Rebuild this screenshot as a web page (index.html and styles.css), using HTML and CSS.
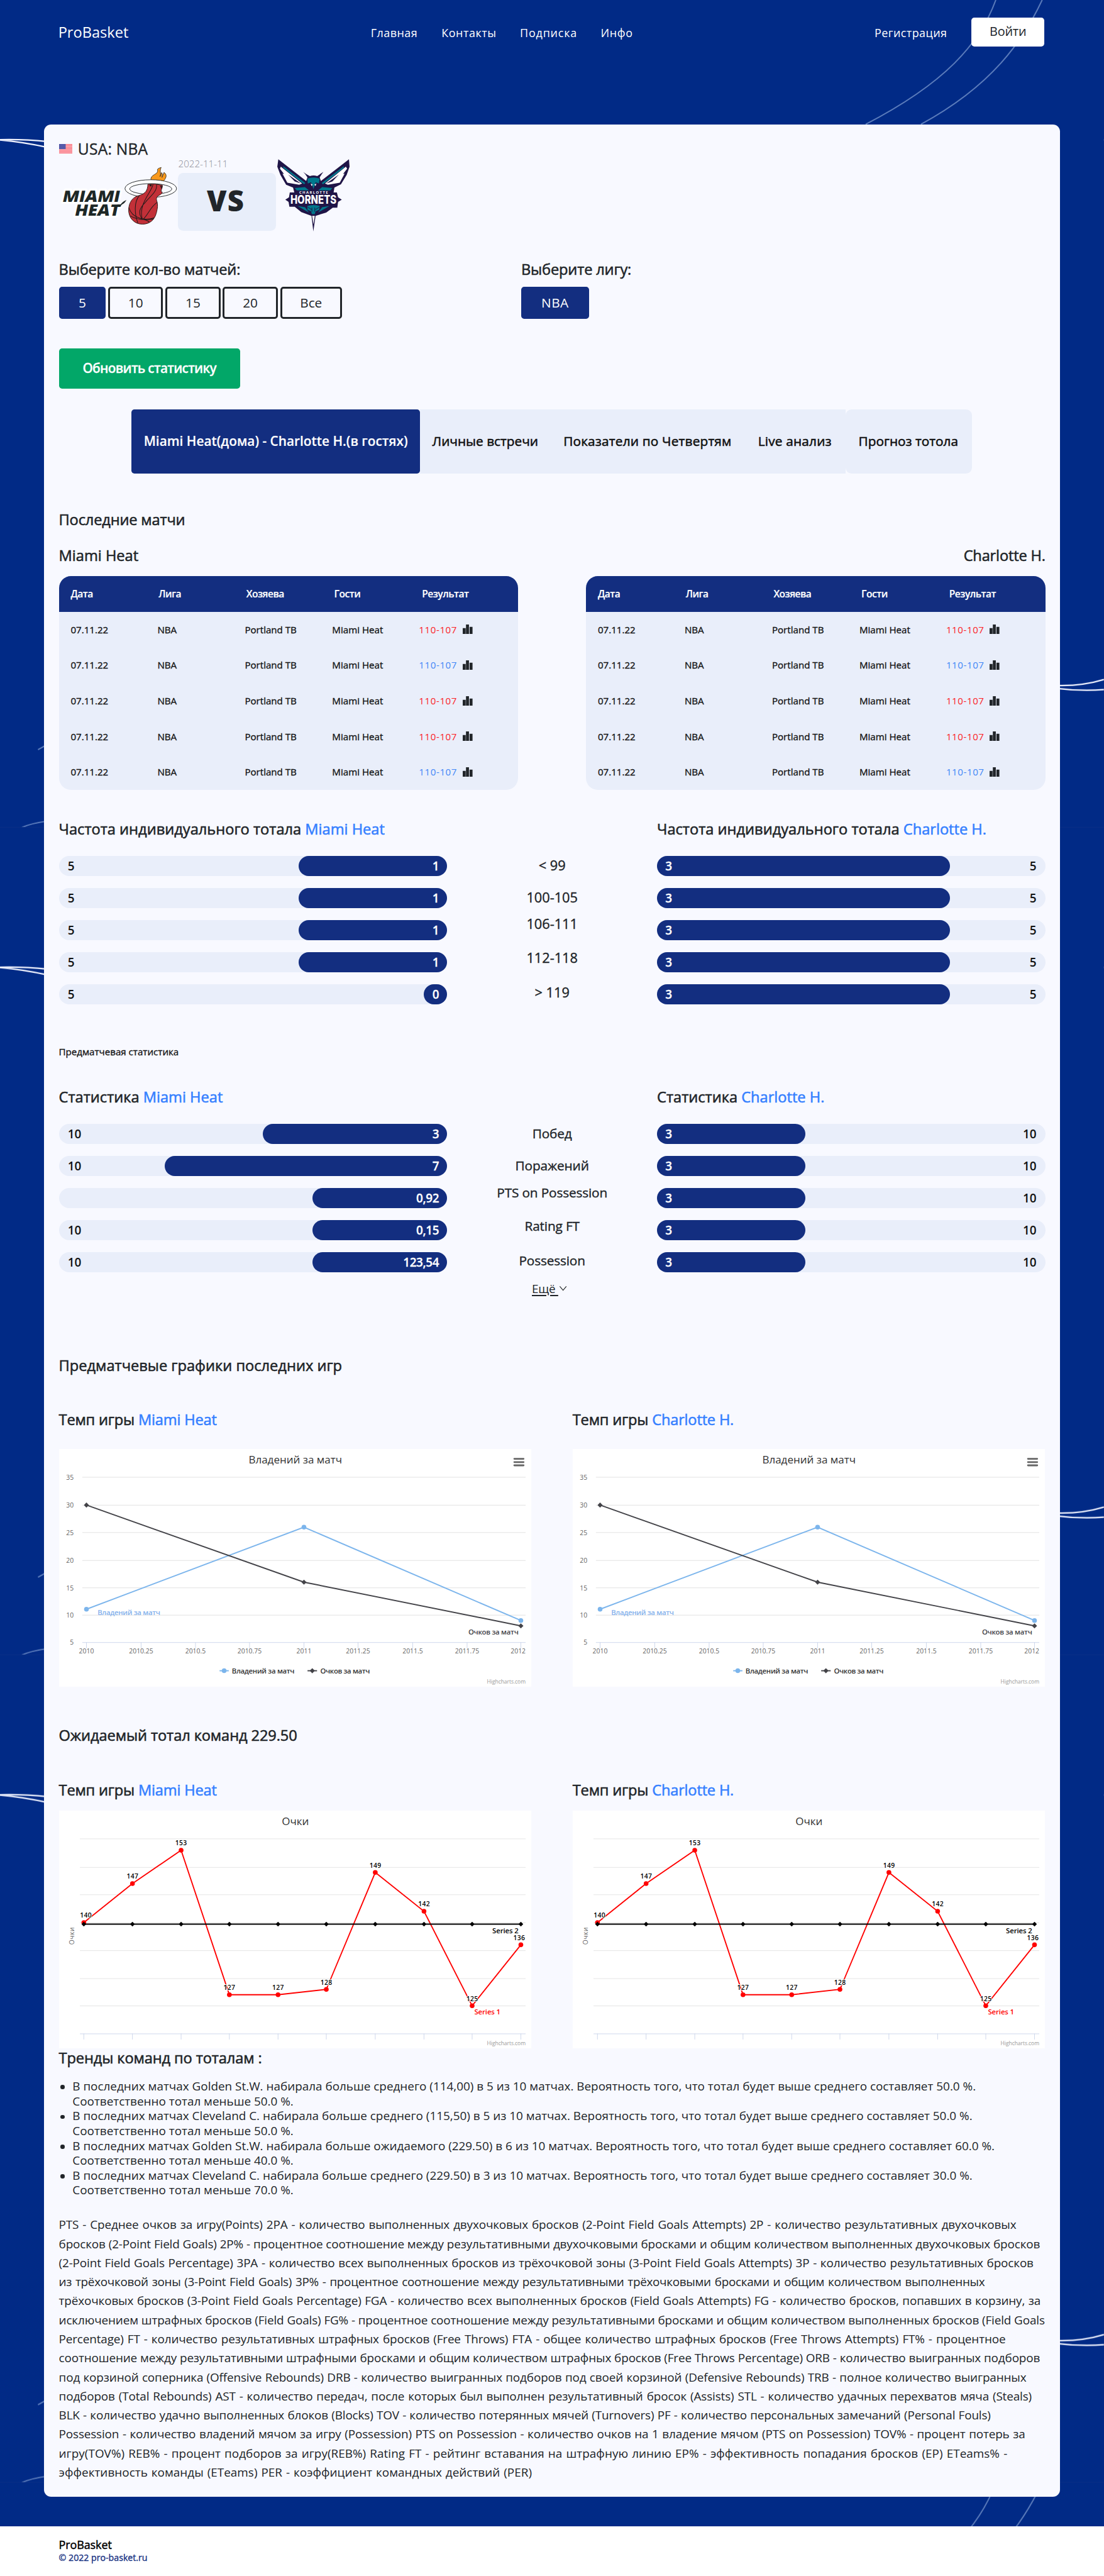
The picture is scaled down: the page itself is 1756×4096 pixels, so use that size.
FILE: index.html
```html
<!DOCTYPE html>
<html lang="ru">
<head>
<meta charset="utf-8">
<title>ProBasket</title>
<link rel="stylesheet" href="styles.css">
</head>
<body>
<div class="page">
<svg class="backdrop" viewBox="0 0 1858 4250" preserveAspectRatio="none" aria-hidden="true">
  <defs>
    <pattern id="court" width="1858" height="1392" patternUnits="userSpaceOnUse">
      <g fill="none" stroke="#5f7fbd" stroke-width="2">
        <path d="M1676 0C1649 74 1590 140 1457 209"/>
        <path d="M1754 0C1722 68 1670 144 1550 209"/>
        <path d="M64 1261L80 1252M36 1392Q52 1385 80 1381"/>
      </g>
      <g fill="none" stroke="#f2f4ff" stroke-width="2.4">
        <path d="M0 235Q38 234 80 238M0 235.500Q40 239 80 248"/>
        <path d="M1780 1153Q1822 1154 1858 1143M1780 1158Q1820 1163 1858 1160"/>
      </g>
      <path d="M0 1391.500H1858" stroke="#0b2f86" stroke-width="1"/>
    </pattern>
  </defs>
  <rect width="1858" height="4250" fill="url(#court)"/>
</svg>

<header class="top">
  <a class="brand">ProBasket</a>
  <nav class="menu"><a class="m1">Главная</a><a class="m2">Контакты</a><a class="m3">Подписка</a><a class="m4">Инфо</a></nav>
  <div class="auth"><a class="reg">Регистрация</a><a class="login">Войти</a></div>
</header>

<main class="card">
  <div class="league">
    <svg width="23" height="16" viewBox="0 0 23 16"><rect width="23" height="16" fill="#fbb6bd"/><path d="M0 .6H23M0 3H23M0 5.500H23M0 8H23M0 10.400H23M0 12.900H23M0 15.400H23" stroke="#fb6a76" stroke-width="1.100"/><rect width="11" height="8.500" fill="#4a4fa3"/><path d="M1 2H10.500M1 4.300H10.500M1 6.600H10.500" stroke="#8d91c8" stroke-width=".8" stroke-dasharray="1 1"/></svg>
    <span>USA: NBA</span>
  </div>
  <div class="match">
    <svg class="logo-heat" width="200" height="124" viewBox="55 131 581 360">
      <g class="heat-word" fill="#1d2726" stroke="#fff" stroke-width="20" stroke-linejoin="round" paint-order="stroke">
        <text transform="translate(68 348) skewX(-12)" textLength="280" lengthAdjust="spacingAndGlyphs">MIAMI</text>
        <text transform="translate(128 417) skewX(-12)" textLength="220" lengthAdjust="spacingAndGlyphs">HEAT</text>
      </g>
      <path d="M340 362H355Q368 346 384 340Q376 356 362 362L352 374H338Z" fill="#1d2726"/>
      <path d="M504 244C498 212 545 218 536 190C540 184 548 183 554 181C544 200 556 212 548 226L556 206C564 215 556 224 558 230L568 205C588 220 574 236 566 247Z" fill="#f8991d" stroke="#26211c" stroke-width="2.500"/>
      <path fill-rule="evenodd" d="M377 284A126 43 0 1 0 629 284A126 43 0 1 0 377 284ZM400 286A103 26 0 1 0 606 286A103 26 0 1 0 400 286Z" fill="#fff" stroke="#26292a" stroke-width="3"/>
      <path d="M489 263Q525 258 560 268C562 285 545 298 560 302C550 322 529 314 531 340C540 362 536 382 530 405C520 440 496 458 462 458C420 458 393 425 395 385C397 350 415 325 445 318C478 310 488 292 489 263Z" fill="#c23038" stroke="#2c1a1a" stroke-width="3"/>
      <path d="M396 378C412 428 470 444 520 427M404 418C440 440 480 436 517 433M447 319C420 350 424 410 440 452M514 264C508 300 440 360 462 434M531 264C538 300 490 330 478 350C446 380 440 405 462 434M534 352C500 375 492 410 466 434M465 434Q490 440 496 448" fill="none" stroke="#221a1a" stroke-width="3.200"/>
      <path d="M497 264h10v9h-8zM548 270l12 2-4 14z" fill="#221a1a"/>
    </svg>
    <div class="versus"><span class="date">2022-11-11</span><strong>VS</strong></div>
    <svg class="logo-hornets" width="126" height="124" viewBox="1115 140 365 360">
      <path d="M1126 144L1262 250L1268 232Q1258 215 1248 206Q1270 222 1280 226Q1298 220 1316 226Q1330 216 1346 205Q1338 216 1328 232L1334 250L1471 144L1474 180L1460 220L1432 266L1400 282L1396 306H1412L1418 330L1436 341L1418 352L1414 380H1392L1360 404L1308 420L1297 496L1288 420L1238 402L1206 376H1180L1176 352L1160 341L1178 330L1182 306H1204L1198 282L1164 268L1136 220L1121 180Z" fill="#201547"/>
      <path d="M1138 180L1242 262L1228 268L1170 258L1146 214L1154 216L1134 190ZM1456 180L1354 262L1368 268L1426 258L1450 214L1442 216L1462 190Z" fill="#fff"/>
      <path d="M1150 178L1258 260L1252 266L1150 186ZM1446 178L1338 260L1344 266L1446 186Z" fill="#00788c"/>
      <path d="M1174 218L1236 262L1206 252ZM1422 218L1360 262L1390 252Z" fill="#201547"/>
      <path d="M1268 238Q1298 228 1328 238L1324 262L1308 256L1298 290L1286 256L1270 262ZM1206 284L1256 280L1276 296H1216ZM1390 284L1340 280L1320 296H1380Z" fill="#00788c"/>
      <path d="M1284 262l10 6-6 6zM1312 262l-10 6 6 6z" fill="#fff"/>
      <text class="charlotte" x="1228" y="312" textLength="140" fill="#fff">CHARLOTTE</text>
      <path d="M1186 312L1206 328V320H1384L1410 310L1408 362L1384 356H1222L1190 362Z" fill="#201547"/>
      <text class="hornets" x="1185" y="361" textLength="225" lengthAdjust="spacingAndGlyphs" fill="#fff">HORNETS</text>
      <path d="M1268 372Q1298 362 1328 372L1326 390L1308 398L1304 412H1290L1286 398L1268 390ZM1220 372L1256 378L1276 404ZM1376 372L1340 378L1320 404Z" fill="#00788c"/>
      <path d="M1270 378l20 12M1326 378l-20 12M1290 400V380M1304 400V380" stroke="#201547" stroke-width="3"/>
      <path d="M1291 420H1304L1298 462Z" fill="#fff"/>
    </svg>
  </div>

  <div class="filters">
    <section>
      <h2 class="h tight">Выберите кол-во матчей:</h2>
      <div class="chips"><a class="chip on c5">5</a><a class="chip c10">10</a><a class="chip c10">15</a><a class="chip c10">20</a><a class="chip call">Все</a></div>
    </section>
    <section>
      <h2 class="h tight">Выберите лигу:</h2>
      <div class="chips"><a class="chip on cnba">NBA</a></div>
    </section>
  </div>
  <a class="refresh">Обновить статистику</a>

  <nav class="tabs"><a class="tab active">Miami Heat(дома) - Charlotte H.(в гостях)</a><a class="tab t2">Личные встречи</a><a class="tab t3">Показатели по Четвертям</a><a class="tab t4">Live анализ</a><a class="tab t5">Прогноз тотола</a></nav>

  <h2 class="h tight recent">Последние матчи</h2>
  <div class="names h"><span>Miami Heat</span><span class="tight">Charlotte H.</span></div>
  <div class="tables"><div class="games"></div><div class="games"></div></div>

  <div class="pair freq-head"><h2 class="h">Частота индивидуального тотала <b>Miami Heat</b></h2><h2 class="h">Частота индивидуального тотала <b>Charlotte H.</b></h2></div>
  <div class="pair" id="freq"></div>

  <p class="pre">Предматчевая статистика</p>
  <div class="pair stat-head"><h2 class="h">Статистика <b>Miami Heat</b></h2><h2 class="h">Статистика <b>Charlotte H.</b></h2></div>
  <div class="pair" id="stat"></div>
  <div class="more"><u>Ещё </u><svg width="14" height="10" viewBox="0 0 14 10"><path d="M1.500 1.500L7 8L12.500 1.500" fill="none" stroke="#212529" stroke-width="1.200"/></svg></div>

  <h2 class="h graphs">Предматчевые графики последних игр</h2>
  <div class="duo tempo1"><h2 class="h">Темп игры <b>Miami Heat</b></h2><h2 class="h">Темп игры <b>Charlotte H.</b></h2></div>
  <div class="duo charts1"><svg class="chart pace" viewBox="0 0 795 400"></svg><svg class="chart pace" viewBox="0 0 795 400"></svg></div>

  <h2 class="h expected">Ожидаемый тотал команд 229.50</h2>
  <div class="duo tempo2"><h2 class="h">Темп игры <b>Miami Heat</b></h2><h2 class="h">Темп игры <b>Charlotte H.</b></h2></div>
  <div class="duo charts2"><svg class="chart points" viewBox="0 0 795 400"></svg><svg class="chart points" viewBox="0 0 795 400"></svg></div>

  <h2 class="h trends-head">Тренды команд по тоталам :</h2>
  <ul class="trends">
    <li>В последних матчах Golden St.W. набирала больше среднего (114,00) в 5 из 10 матчах. Вероятность того, что тотал будет выше среднего составляет 50.0 %.<br>Соответственно тотал меньше 50.0 %.</li>
    <li>В последних матчах Cleveland C. набирала больше среднего (115,50) в 5 из 10 матчах. Вероятность того, что тотал будет выше среднего составляет 50.0 %.<br>Соответственно тотал меньше 50.0 %.</li>
    <li>В последних матчах Golden St.W. набирала больше ожидаемого (229.50) в 6 из 10 матчах. Вероятность того, что тотал будет выше среднего составляет 60.0 %.<br>Соответственно тотал меньше 40.0 %.</li>
    <li>В последних матчах Cleveland C. набирала больше среднего (229.50) в 3 из 10 матчах. Вероятность того, что тотал будет выше среднего составляет 30.0 %.<br>Соответственно тотал меньше 70.0 %.</li>
  </ul>
  <p class="glossary">
    <span style="width:1611px">PTS - Среднее очков за игру(Points) 2PA - количество выполненных двухочковых бросков (2-Point Field Goals Attempts) 2P - количество результативных двухочковых</span>
    <span style="width:1651px">бросков (2-Point Field Goals) 2P% - процентное соотношение между результативными двухочковыми бросками и общим количеством выполненных двухочковых бросков</span>
    <span style="width:1640px">(2-Point Field Goals Percentage) 3PA - количество всех выполненных бросков из трёхочковой зоны (3-Point Field Goals Attempts) 3P - количество результативных бросков</span>
    <span class="dense" style="width:1558px">из трёхочковой зоны (3-Point Field Goals) 3P% - процентное соотношение между результативными трёхочковыми бросками и общим количеством выполненных</span>
    <span style="width:1652px">трёхочковых бросков (3-Point Field Goals Percentage) FGA - количество всех выполненных бросков (Field Goals Attempts) FG - количество бросков, попавших в корзину, за</span>
    <span style="width:1659px">исключением штрафных бросков (Field Goals) FG% - процентное соотношение между результативными бросками и общим количеством выполненных бросков (Field Goals</span>
    <span style="width:1593px">Percentage) FT - количество результативных штрафных бросков (Free Throws) FTA - общее количество штрафных бросков (Free Throws Attempts) FT% - процентное</span>
    <span style="width:1651px">соотношение между результативными штрафными бросками и общим количеством штрафных бросков (Free Throws Percentage) ORB - количество выигранных подборов</span>
    <span style="width:1628px">под корзиной соперника (Offensive Rebounds) DRB - количество выигранных подборов под своей корзиной (Defensive Rebounds) TRB - полное количество выигранных</span>
    <span style="width:1637px">подборов (Total Rebounds) AST - количество передач, после которых был выполнен результативный бросок (Assists) STL - количество удачных перехватов мяча (Steals)</span>
    <span style="width:1568px">BLK - количество удачно выполненных блоков (Blocks) TOV - количество потерянных мячей (Turnovers) PF - количество персональных замечаний (Personal Fouls)</span>
    <span style="width:1626px">Possession - количество владений мячом за игру (Possession) PTS on Possession - количество очков на 1 владение мячом (PTS on Possession) TOV% - процент потерь за</span>
    <span class="loose" style="width:1596px">игру(TOV%) REB% - процент подборов за игру(REB%) Rating FT - рейтинг вставания на штрафную линию EP% - эффективность попадания бросков (EP) ETeams% -</span>
    <span class="loose" style="width:796px">эффективность команды (ETeams) PER - коэффициент командных действий (PER)</span>
  </p>
</main>

<footer class="foot"><strong>ProBasket</strong><span>© 2022 pro-basket.ru</span></footer>
</div>
<script src="app.js"></script>
</body>
</html>
```
FILE: styles.css
```css
* { box-sizing: border-box; }
html { background: #fff; }
body { margin: 0; width: 1756px; height: 4096px; overflow: hidden; }
.page {
  width: 1857.500px;
  height: 4333px;
  zoom: 0.9453;
  position: relative;
  overflow: hidden;
  background: linear-gradient(#012a86 4250px, #fff 4250px);
  font-family: "Open Sans", "Noto Sans", sans-serif;
  font-size: 20px;
  color: #212529;
  white-space: nowrap;
}
h2, p, ul { margin: 0; }
.backdrop { position: absolute; left: 0; top: 0; width: 100%; height: 4250px; }

.top { position: relative; height: 108px; padding: 0 100px 0 99px; display: grid; grid-template-columns: 525px 1fr auto; align-items: center; color: #fff; }
.brand { font-size: 25px; line-height: 30px; margin-left: -1px; }
.menu { display: flex; gap: 40px; font-size: 19px; padding-top: 3px; }
.m1 { width: 79px; letter-spacing: .45px; }
.m2 { width: 92px; letter-spacing: .55px; }
.m3 { width: 96px; letter-spacing: .85px; }
.m4 { letter-spacing: .6px; }
.auth { display: flex; align-items: center; gap: 41px; font-size: 19px; }
.reg { letter-spacing: .45px; padding-top: 3px; }
.login { width: 123px; height: 48px; line-height: 46px; border-radius: 5px; background: #fff; color: #212529; font-size: 21px; letter-spacing: -.2px; text-align: center; }

.card { position: relative; margin: 101px 73.500px 0 74px; height: 3991px; padding: 28px 25px 0; border-radius: 12px; background: #f8f9ff; }
.h { font-size: 25px; line-height: 30px; font-weight: 400; -webkit-text-stroke: .6px currentColor; }
.h b { font-weight: 400; color: #3580ff; }
.tight { letter-spacing: -.18px; }

.league { display: flex; align-items: center; gap: 9px; height: 27px; font-size: 26px; letter-spacing: .25px; -webkit-text-stroke: .4px currentColor; }
.match { display: flex; height: 128px; padding-top: 1px; }
.logo-hornets { margin-top: 2px; }
.heat-word { font: 800 77px "Open Sans", sans-serif; }
.charlotte { font: 700 18px "Open Sans", sans-serif; }
.hornets { font: 800 56px "Inter", sans-serif; }
.versus { width: 165px; }
.date { display: block; height: 26px; line-height: 22px; padding-left: 1px; font-size: 16px; font-weight: 300; color: #8b8d96; }
.versus strong { display: block; height: 97px; line-height: 94px; border-radius: 9px; background: #e8eefa; text-align: center; padding-right: 3px; font-size: 48px; font-weight: 800; letter-spacing: 1.500px; }

.filters { margin-top: 46px; display: grid; grid-template-columns: 778px 1fr; }
.chips { display: flex; gap: 4px; margin-top: 14px; }
.chip { height: 54px; line-height: 47px; border: 3.200px solid #212529; border-radius: 5px; text-align: center; font-size: 22px; }
.chip.on { background: #132e80; border-color: #132e80; color: #fff; }
.c5 { width: 79px; }
.c10 { width: 92.500px; }
.call { width: 104px; }
.cnba { width: 114px; letter-spacing: .5px; }
.refresh { display: block; margin-top: 50px; width: 305px; height: 68px; line-height: 67px; border-radius: 5px; background: #02a768; color: #fff; text-align: center; font-size: 22px; font-weight: 600; letter-spacing: -.75px; -webkit-text-stroke: .3px #fff; }

.tabs { display: flex; margin: 35px 0 0 122px; height: 108px; line-height: 107px; font-size: 22px; text-align: center; color: #111; }
.tab { background: #e9eefa; -webkit-text-stroke: .6px currentColor; }
.tab.active { width: 486px; background: #132e80; color: #fff; border-radius: 5px; font-weight: 600; letter-spacing: .02px; -webkit-text-stroke: .2px #fff; }
.t2 { width: 220px; padding-right: 1px; }
.t3 { width: 328px; padding-right: 3px; letter-spacing: .2px; }
.t4 { width: 168px; padding-right: 3px; letter-spacing: .2px; }
.t5 { width: 213px; padding-right: 2px; border-radius: 10px; }

.recent { margin-top: 62px; }
.names { margin-top: 30px; display: flex; justify-content: space-between; }
.tables { margin-top: 20px; display: flex; justify-content: space-between; }
.games { width: 773px; height: 360px; border-radius: 20px; overflow: hidden; background: #e9eefa; }
.row { display: grid; grid-template-columns: 146px 147px 147px 146px auto; height: 60px; line-height: 60px; padding-left: 20px; font-size: 16px; color: #111; -webkit-text-stroke: .35px currentColor; }
.row.head { grid-template-columns: repeat(4, 147.800px) auto; background: #132e80; color: #fff; font-size: 16.500px; font-weight: 600; letter-spacing: -.55px; -webkit-text-stroke: .2px #fff; }
.score { display: flex; align-items: center; gap: 9px; -webkit-text-stroke: 0; letter-spacing: .6px; }
.lost { color: #fb2226; }
.won { color: #4286f7; }

.pair { display: grid; grid-template-columns: 653.500px 353px 653.500px; }
.pair .h:last-child { grid-column: 3; }
.freq-head { margin-top: 51px; margin-bottom: 30px; }
.stat-head { margin-top: 51px; margin-bottom: 30px; }
.bars { display: grid; gap: 20px; }
.bar { display: flex; justify-content: space-between; height: 34px; line-height: 34px; border-radius: 17px; background: #e9eefa; font-size: 20px; font-weight: 600; color: #111; }
.bar .total { padding: 0 15px; }
.bar .fill { border-radius: 17px; background: #132e80; color: #fff; padding: 0 14px; text-align: right; letter-spacing: -.4px; -webkit-text-stroke: .3px #fff; }
.bar.right .fill { text-align: left; }
.labels { text-align: center; font-size: 23px; line-height: 30px; }
.labels div { height: 30px; -webkit-text-stroke: .4px currentColor; }
.labels div:nth-child(1) { margin-top: 1px; }
.labels div:nth-child(2) { margin-top: 24px; }
.labels div:nth-child(3) { margin-top: 15px; }
.labels div:nth-child(4) { margin-top: 27px; }
.labels div:nth-child(5) { margin-top: 28px; }
#stat .labels { font-size: 22px; letter-spacing: -.15px; }
.pre { margin-top: 70px; font-size: 16px; line-height: 20px; color: #111; -webkit-text-stroke: .35px currentColor; }
.more { margin: 15px 0 0 796px; display: flex; align-items: center; gap: 6px; height: 24px; line-height: 24px; font-size: 20px; letter-spacing: -.3px; }
.more u { text-decoration-thickness: 2px; text-underline-offset: 3px; white-space: pre; width: 39px; }

.graphs { margin-top: 102px; }
.duo { display: grid; grid-template-columns: 795px 795px; column-gap: 69.500px; }
.duo .h { letter-spacing: -.2px; }
.tempo1 { margin-top: 61px; }
.charts1 { margin-top: 35px; }
.expected { margin-top: 67px; letter-spacing: -.1px; }
.tempo2 { margin-top: 61px; }
.charts2 { margin-top: 20px; }
.chart { width: 795px; height: 400px; background: #fff; display: block; }
.chart text { font-family: "Open Sans", sans-serif; }
.title { font-size: 18px; fill: #333; }
.axis { font-size: 11px; fill: #666; }
.series { font-size: 12px; font-weight: 600; }
.value { font-size: 11px; font-weight: 600; fill: #000; stroke: #fff; stroke-width: 2px; paint-order: stroke; }
.credit { font-size: 9px; fill: #999; }

.trends-head { margin-top: 1px; letter-spacing: -.12px; }
.trends { margin-top: 21px; padding-left: 23px; list-style: none; line-height: 25px; }
.trends li { position: relative; }
.trends li::before { content: ""; position: absolute; left: -20px; top: 10px; width: 7px; height: 7px; border-radius: 50%; background: #212529; }
.glossary { margin-top: 29px; line-height: 32.030px; letter-spacing: -.14px; }
.glossary span { display: block; height: 32.030px; text-align-last: justify; }
.glossary .dense { letter-spacing: -.32px; }
.glossary .loose { letter-spacing: .03px; }

.foot { position: relative; margin-top: 50px; height: 83px; padding: 21px 99px 0; background: #fff; display: flex; flex-direction: column; }
.foot strong { font-size: 19px; line-height: 21px; font-weight: 400; color: #000; letter-spacing: -.1px; -webkit-text-stroke: .5px #000; }
.foot span { margin-top: 1px; font-size: 15px; line-height: 20px; color: #132e80; -webkit-text-stroke: .35px #132e80; }
```
FILE: app.js
```js
// Recent games
const results = ['lost', 'won', 'lost', 'lost', 'won'];
const barIcon = '<svg width="17" height="16" viewBox="0 0 17 16"><path d="M0 6h5v10H0zM5.500 0h5v16h-5zM11.500 4H16.500v12h-5z" fill="#212529"/></svg>';
document.querySelectorAll('.games').forEach(el => {
  el.innerHTML = '<div class="row head"><span>Дата</span><span>Лига</span><span>Хозяева</span><span>Гости</span><span>Результат</span></div>' +
    results.map(r => `<div class="row"><span>07.11.22</span><span>NBA</span><span>Portland TB</span><span>Miami Heat</span><span class="score ${r}">110-107${barIcon}</span></div>`).join('');
});

// Comparison bars: [label, left total, left value, left width, right value, right width, right total]
function compare(id, rows) {
  const left = rows.map(r => `<div class="bar"><span class="total">${r[1]}</span><span class="fill" style="width:${r[3]}px">${r[2]}</span></div>`).join('');
  const mid = rows.map(r => `<div>${r[0]}</div>`).join('');
  const right = rows.map(r => `<div class="bar right"><span class="fill" style="width:${r[5]}px">${r[4]}</span><span class="total">${r[6]}</span></div>`).join('');
  document.getElementById(id).innerHTML = `<div class="bars">${left}</div><div class="labels">${mid}</div><div class="bars">${right}</div>`;
}
compare('freq', [
  ['&lt; 99', 5, 1, 250, 3, 493, 5],
  ['100-105', 5, 1, 250, 3, 493, 5],
  ['106-111', 5, 1, 250, 3, 493, 5],
  ['112-118', 5, 1, 250, 3, 493, 5],
  ['&gt; 119', 5, 0, 39, 3, 493, 5]
]);
compare('stat', [
  ['Побед', 10, 3, 310, 3, 250, 10],
  ['Поражений', 10, 7, 475, 3, 250, 10],
  ['PTS on Possession', '', '0,92', 227, 3, 250, 10],
  ['Rating FT', 10, '0,15', 227, 3, 250, 10],
  ['Possession', 10, '123,54', 227, 3, 250, 10]
]);

// Charts
const text = (cls, x, y, s, anchor = 'start', extra = '') => `<text class="${cls}" x="${x}" y="${y}" text-anchor="${anchor}" ${extra}>${s}</text>`;
const diamond = (x, y, r, c) => `<path d="M${x} ${y - r}L${x + r} ${y}L${x} ${y + r}L${x - r} ${y}Z" fill="${c}"/>`;
const dot = (x, y, c) => `<circle cx="${x}" cy="${y}" r="4" fill="${c}"/>`;
const line = (pts, c, w) => `<polyline points="${pts.map(p => p.join()).join(' ')}" fill="none" stroke="${c}" stroke-width="${w}"/>`;

function pace() {
  const ys = [47.5, 94.5, 140.5, 187.5, 233.5, 279.5, 325.5];
  const xs = [46, 138, 229.5, 320.5, 412, 503, 595, 686.5, 777];
  const names = ['2010', '2010.25', '2010.5', '2010.75', '2011', '2011.25', '2011.5', '2011.75', '2012'];
  let s = text('title', 397.5, 24.5, 'Владений за матч', 'middle');
  s += '<path d="M766 16.500H781.500M766 22H781.500M766 27.500H781.500" stroke="#666" stroke-width="3" stroke-linecap="round"/>';
  ys.forEach((y, i) => {
    s += `<path d="M39 ${y}H785" stroke="${i === 6 ? '#ccd6eb' : '#e0e0e0'}"/>` + text('axis', 24.5, y + 4, 35 - i * 5, 'end');
  });
  xs.forEach((x, i) => {
    s += `<path d="M${x} 325V335" stroke="#ccd6eb"/>` + (i === 8 ? text('axis', 785, 343.5, names[i], 'end') : text('axis', x, 343.5, names[i], 'middle'));
  });
  const blue = [[46, 269.5], [412, 131.5], [777, 288.5]], dark = [[46, 94.3], [412, 224], [777, 297.5]];
  s += line(blue, '#7cb5ec', 2) + blue.map(p => dot(...p, '#7cb5ec')).join('');
  s += line(dark, '#434348', 2) + dark.map(p => diamond(...p, 4.3, '#434348')).join('');
  s += text('series', 64.7, 279, 'Владений за матч', 'start', 'fill="#84b1ec" textLength="105.500"');
  s += text('series', 688.6, 312, 'Очков за матч', 'start', 'fill="#434348" textLength="84.500"');
  s += '<path d="M270 373H285.500" stroke="#7cb5ec" stroke-width="2"/>' + dot(277.7, 373, '#7cb5ec') + text('series', 290.7, 377.3, 'Владений за матч', 'start', 'fill="#333" textLength="105.500"');
  s += '<path d="M418 373H434" stroke="#434348" stroke-width="2"/>' + diamond(426, 373, 4.3, '#434348') + text('series', 439.5, 377.3, 'Очков за матч', 'start', 'fill="#333" textLength="83.500"');
  return s + text('credit', 785, 395, 'Highcharts.com', 'end', 'textLength="65"');
}

function points() {
  const xs = [41.6, 123.4, 205.3, 286.5, 368.4, 449.6, 532, 614, 695, 777];
  const v = [140, 147, 153, 127, 127, 128, 149, 142, 125, 136];
  const y = [188.3, 122.7, 66.7, 309.7, 309.7, 300.7, 104, 169.3, 328.3, 225.7];
  let s = text('title', 397.5, 24, 'Очки', 'middle');
  [47.5, 95.5, 141.5, 188.5, 235.5, 282.5, 328.5, 375.5].forEach((g, i) => {
    s += `<path d="M35 ${g}H785" stroke="${i === 7 ? '#ccd6eb' : '#e3e3e3'}"/>`;
  });
  xs.forEach(x => { s += `<path d="M${x} 375V385" stroke="#ccd6eb"/>`; });
  s += '<text class="axis" transform="translate(25 211) rotate(-90)" text-anchor="middle" textLength="29">Очки</text>';
  const pts = xs.map((x, i) => [x, y[i]]);
  s += line(pts, '#f00', 2) + pts.map(p => dot(...p, '#f00')).join('');
  s += line([[41.6, 191], [777, 191]], '#000', 2) + xs.map(x => diamond(x, 191, 4, '#000')).join('');
  pts.forEach(([x, py], i) => {
    s += text('value', i === 0 ? 45 : i === 9 ? 774 : x, py - 8, v[i], 'middle', 'textLength="19.500"');
  });
  s += text('series', 729, 206, 'Series 2', 'start', 'fill="#000" textLength="44"');
  s += text('series', 698.7, 343, 'Series 1', 'start', 'fill="#f00" textLength="44"');
  return s + text('credit', 785, 394.7, 'Highcharts.com', 'end', 'textLength="65"');
}
document.querySelectorAll('.pace').forEach(el => { el.innerHTML = pace(); });
document.querySelectorAll('.points').forEach(el => { el.innerHTML = points(); });
```
